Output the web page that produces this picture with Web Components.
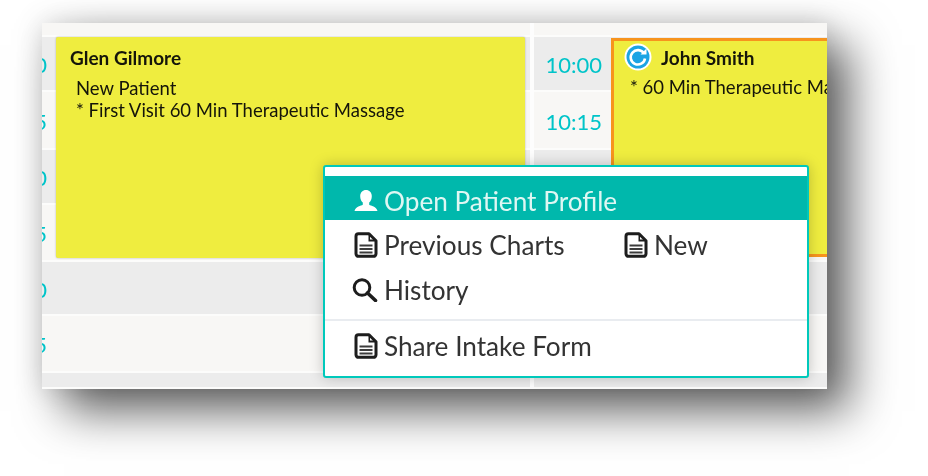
<!DOCTYPE html>
<html>
<head>
<meta charset="utf-8">
<title>Schedule</title>
<style>
  html, body { margin: 0; background: #fff; }
  body { width: 928px; height: 476px; overflow: hidden; font-family: Lato, "Liberation Sans", sans-serif; }
</style>
</head>
<body>
<sched-page>
  <sched-band style="grid-row:1" tone="light"></sched-band>
  <sched-band style="grid-row:2" tone="gray"></sched-band>
  <sched-band style="grid-row:3" tone="light"></sched-band>
  <sched-band style="grid-row:4" tone="gray"></sched-band>
  <sched-band style="grid-row:5" tone="light"></sched-band>
  <sched-band style="grid-row:6" tone="gray"></sched-band>
  <sched-band style="grid-row:7" tone="light"></sched-band>
  <sched-band style="grid-row:8" tone="gray"></sched-band>
  <sched-gutter></sched-gutter>

  <time-cell style="grid-area:2/1">0</time-cell>
  <time-cell style="grid-area:3/1">5</time-cell>
  <time-cell style="grid-area:4/1">0</time-cell>
  <time-cell style="grid-area:5/1">5</time-cell>
  <time-cell style="grid-area:6/1">0</time-cell>
  <time-cell style="grid-area:7/1">5</time-cell>
  <time-cell style="grid-area:2/5">10:00</time-cell>
  <time-cell style="grid-area:3/5">10:15</time-cell>

  <appt-card style="grid-area:2/2/6/3" name="Glen Gilmore">
    <div>New Patient</div>
    <div>* First Visit 60 Min Therapeutic Massage</div>
  </appt-card>
  <appt-card style="grid-area:2/6/6/7" name="John Smith" active>
    <div>* 60 Min Therapeutic Massage</div>
  </appt-card>

  <context-menu slot="over">
    <menu-item slot="head" icon="user">Open Patient Profile</menu-item>
    <menu-item icon="file">Previous Charts</menu-item>
    <menu-item icon="file">New</menu-item>
    <menu-item icon="search">History</menu-item>
    <menu-item slot="foot" icon="file">Share Intake Form</menu-item>
  </context-menu>
</sched-page>

<script>
class SchedPage extends HTMLElement {
  constructor() {
    super();
    this.attachShadow({ mode: "open" });
    this.shadowRoot.innerHTML = `
    <style>
      :host { display: block; padding: 23px 0 0 42px; }
      .frame {
        position: relative;
        width: 785px;
        height: 366px;
        box-shadow: 22px 22px 44px rgba(0,0,0,.62), 0 0 26px rgba(0,0,0,.14);
      }
      .grid {
        display: grid;
        width: 100%;
        height: 100%;
        overflow: hidden;
        grid-template-columns: 14px 470px 4px 4px 77px 216px;
        grid-template-rows: 14px 55px 58px 55px 57px 54px 57px 16px;
        filter: blur(.4px);
      }
    </style>
    <div class="frame">
      <div class="grid"><slot></slot></div>
      <slot name="over"></slot>
    </div>`;
  }
}

class SchedBand extends HTMLElement {
  constructor() {
    super();
    this.attachShadow({ mode: "open" });
    this.shadowRoot.innerHTML = `
    <style>
      :host { display: block; grid-column: 1 / -1; background: #f8f7f5; border-bottom: 2px solid #fcfcfb; box-sizing: border-box; }
      :host([tone="gray"]) { background: #ececec; }
    </style>`;
  }
}

class SchedGutter extends HTMLElement {
  constructor() {
    super();
    this.attachShadow({ mode: "open" });
    this.shadowRoot.innerHTML = `<style>:host { display: block; grid-area: 1 / 4 / -1 / 5; background: #fdfdfd; }</style>`;
  }
}

class TimeCell extends HTMLElement {
  constructor() {
    super();
    this.attachShadow({ mode: "open" });
    this.shadowRoot.innerHTML = `
    <style>
      :host {
        display: flex;
        align-items: center;
        justify-content: flex-end;
        overflow: hidden;
        padding-right: 9px;
        color: #00c4c9;
        font: 22px Lato, "Liberation Sans", sans-serif;
      }
    </style>
    <slot></slot>`;
  }
}

class ApptCard extends HTMLElement {
  constructor() {
    super();
    this.attachShadow({ mode: "open" });
  }

  getStyles() {
    return `
    <style>
      :host {
        display: block;
        box-sizing: border-box;
        overflow: hidden;
        background: #efed3f;
        color: #15150a;
        padding: 10px 14px;
        margin: 0 1px 4px 0;
        font: 18.5px/22px Lato, "Liberation Sans", sans-serif;
        border-radius: 2px;
        box-shadow: 0 0 2px rgba(0,0,0,.3);
        white-space: nowrap;
      }
      :host([active]) {
        border: 3px solid #f7941d;
        border-right: 0;
        border-radius: 0;
        padding: 2px 0 2px 10px;
        margin: 1px 0 5px;
        box-shadow: none;
      }
      .name { font-weight: 700; font-size: 19px; margin-bottom: 8px; }
      :host([active]) .name { display: flex; align-items: center; gap: 9px; height: 28px; margin-bottom: 5px; }
      :host([active]) .name span { padding-top: 2px; }
      .body { padding-left: 6px; }
      svg { display: none; width: 28px; height: 28px; flex: none; }
      :host([active]) svg { display: block; }
    </style>`;
  }

  connectedCallback() {
    this.shadowRoot.innerHTML = `
    ${this.getStyles()}
    <div class="name">
      <svg viewBox="0 0 28 28">
        <circle cx="14" cy="14" r="13.5" fill="#fff"/>
        <circle cx="14" cy="14" r="11.5" fill="#1ba4e4"/>
        <path d="M20 10.500A7.200 7.200 0 1 0 21 15.500" fill="none" stroke="#fff" stroke-width="2.600"/>
        <path d="M16.500 11.500h6v-6z" fill="#fff"/>
      </svg>
      <span>${this.getAttribute("name")}</span>
    </div>
    <div class="body"><slot></slot></div>`;
  }
}

class ContextMenu extends HTMLElement {
  constructor() {
    super();
    this.attachShadow({ mode: "open" });
    this.shadowRoot.innerHTML = `
    <style>
      :host {
        position: absolute;
        left: 281px;
        top: 142px;
        width: 486px;
        height: 213px;
        box-sizing: border-box;
        display: block;
        background: #fff;
        border: 2px solid #00c9bb;
        border-radius: 3px;
        padding-top: 9px;
        box-shadow: 0 0 14px rgba(0,0,0,.22);
        filter: blur(.4px);
      }
      .head { background: #00b8ac; height: 44px; display: flex; align-items: center; padding: 5px 0 0 29px; box-sizing: border-box; }
      .list {
        display: grid;
        grid-template-columns: 270px auto;
        grid-auto-rows: 45px;
        justify-content: start;
        align-items: center;
        padding: 2px 0 7px 29px;
        border-bottom: 2px solid #e9ecf0;
      }
      .foot { display: flex; align-items: center; padding: 4px 0 0 29px; height: 46px; box-sizing: border-box; }
    </style>
    <div class="head"><slot name="head"></slot></div>
    <div class="list"><slot></slot></div>
    <div class="foot"><slot name="foot"></slot></div>`;
  }
}

const ICONS = {
  user: `<svg viewBox="0 0 24 24" width="24" height="24"><path fill="#fff" d="M12 1c-3.300 0-5.800 2.500-5.800 6.200 0 2.800 1.100 5 2.600 6.300v2.200c-1.600 1.100-7.300 1.700-8.300 6.300h23c-1-4.600-6.700-5.200-8.300-6.300v-2.200c1.500-1.300 2.600-3.500 2.600-6.300 0-3.700-2.500-6.200-5.800-6.200z"/></svg>`,
  file: `<svg viewBox="0 0 24 26" width="24" height="26"><path fill="none" stroke="#1d1d1d" stroke-width="3" stroke-linejoin="round" d="M4.500 1.800h10.500l7 7v13a2.500 2.500 0 0 1-2.500 2.500h-15a2.500 2.500 0 0 1-2.500-2.500v-17.500a2.500 2.500 0 0 1 2.500-2.500z"/><path fill="#1d1d1d" d="M14.500 2h1.500v5.500h6v2h-7.500z"/><path fill="#3c3c3c" d="M5.500 12.500h13v2h-13zM5.500 16h13v2h-13zM5.500 19.500h13v2h-13z"/></svg>`,
  search: `<svg viewBox="0 0 26 24" width="26" height="24" style="margin-left:-2px"><circle cx="10" cy="9.500" r="7.800" fill="none" stroke="#1d1d1d" stroke-width="3"/><path d="M15.500 15l8 7.500" stroke="#1d1d1d" stroke-width="3.600" stroke-linecap="round"/></svg>`
};

class MenuItem extends HTMLElement {
  constructor() {
    super();
    this.attachShadow({ mode: "open" });
  }

  connectedCallback() {
    const icon = this.getAttribute("icon");
    this.shadowRoot.innerHTML = `
    <style>
      :host {
        display: flex;
        align-items: center;
        gap: 6px;
        color: #333;
        font: 26.200px/30px Lato, "Liberation Sans", sans-serif;
        white-space: nowrap;
      }
      :host([slot="head"]) { color: #dff7f3; }
      svg { display: block; flex: none; }
    </style>
    ${ICONS[icon]}
    <span><slot></slot></span>`;
  }
}

customElements.define("sched-page", SchedPage);
customElements.define("sched-band", SchedBand);
customElements.define("sched-gutter", SchedGutter);
customElements.define("time-cell", TimeCell);
customElements.define("appt-card", ApptCard);
customElements.define("context-menu", ContextMenu);
customElements.define("menu-item", MenuItem);
</script>
</body>
</html>
